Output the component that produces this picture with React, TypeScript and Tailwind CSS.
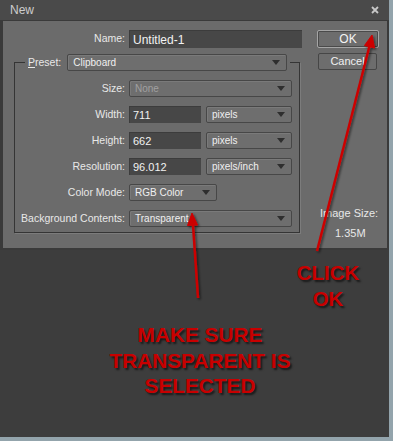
import React from "react";

const Caret = () => (
  <svg width="8" height="5" viewBox="0 0 8 5" className="shrink-0">
    <path d="M0 0 L8 0 L4 5 Z" fill="#2e2e2e" />
  </svg>
);

function Dropdown({ w, text, disabled }: { w: string; text: string; disabled?: boolean }) {
  return (
    <div
      className={`${w} h-[17px] border border-[#474747] rounded-[2px] bg-[#6e6e6e] flex items-center justify-between pl-[5px] pr-[6px] shadow-[inset_1px_1px_0_#7a7a7a]`}
    >
      <span className={`text-[10px] ${disabled ? "text-[#a0a0a0]" : "text-[#f0f0f0]"}`}>{text}</span>
      <Caret />
    </div>
  );
}

function Input({ w, text }: { w: string; text: string }) {
  return (
    <div className={`${w} h-[17px] bg-[#474747] border-t border-l border-[#3c3c3c] flex items-center pl-[3px]`}>
      <span className="text-[11px] text-[#f2f2f2]">{text}</span>
    </div>
  );
}

function Row({ label, children }: { label: string; children: React.ReactNode }) {
  return (
    <div className="flex items-center h-[17px]">
      <div className="w-[110px] text-right text-[10.5px] text-[#e8e8e8] whitespace-nowrap">{label}</div>
      <div className="ml-[4px] flex items-center gap-[5px]">{children}</div>
    </div>
  );
}

export default function App() {
  return (
    <div className="w-[393px] h-[441px] relative overflow-hidden bg-[#3d3d3d] border-r-[4px] border-b-[4px] border-[#93a4ac] font-['Liberation_Sans',Arial,sans-serif]">
      {/* window */}
      <div className="w-[389px]">
        {/* title bar */}
        <div className="h-[20px] bg-[#4a4a4a] flex items-center justify-between pl-[10px] pr-[10px]">
          <span className="text-[12px] text-[#cdcdcd]">New</span>
          <svg width="8" height="8" viewBox="0 0 8 8">
            <path d="M1 1 L7 7 M7 1 L1 7" stroke="#c8c8c8" strokeWidth="1.8" />
          </svg>
        </div>
        {/* body */}
        <div className="h-[230px] bg-[#6b6b6b] border-t border-l-[3px] border-r-[2px] border-b-[2px] border-[#3a3a3a] flex pt-[9px]">
          {/* left column */}
          <div className="w-[300px] flex flex-col">
            <div className="flex items-center h-[18px]">
              <div className="w-[122px] text-right text-[10.5px] text-[#e8e8e8]">Name:</div>
              <div className="ml-[4px] w-[173px] h-[18px] bg-[#474747] border-t border-l border-[#3c3c3c] flex items-center pl-[3px]">
                <span className="text-[12px] text-[#f2f2f2]">Untitled-1</span>
              </div>
            </div>
            <fieldset className="mt-[6px] ml-[11px] w-[286px] border border-[#353535] shadow-[1px_1px_0_#7c7c7c] px-0 pt-[9px] pb-[5px] flex flex-col gap-[9px] min-w-0">
              <legend className="ml-[10px] px-[3px] flex items-center">
                <span className="text-[10.5px] text-[#e8e8e8]">
                  <span className="underline">P</span>reset:
                </span>
                <div className="ml-[6px]">
                  <Dropdown w="w-[220px]" text="Clipboard" />
                </div>
              </legend>
              <Row label="Size:">
                <Dropdown w="w-[163px]" text="None" disabled />
              </Row>
              <Row label="Width:">
                <Input w="w-[72px]" text="711" />
                <Dropdown w="w-[86px]" text="pixels" />
              </Row>
              <Row label="Height:">
                <Input w="w-[72px]" text="662" />
                <Dropdown w="w-[86px]" text="pixels" />
              </Row>
              <Row label="Resolution:">
                <Input w="w-[72px]" text="96.012" />
                <Dropdown w="w-[86px]" text="pixels/inch" />
              </Row>
              <Row label="Color Mode:">
                <Dropdown w="w-[88px]" text="RGB Color" />
              </Row>
              <Row label="Background Contents:">
                <Dropdown w="w-[163px]" text="Transparent" />
              </Row>
            </fieldset>
          </div>
          {/* right column */}
          <div className="ml-[14px] w-[62px] flex flex-col items-start">
            <div className="w-[62px] h-[18px] border border-[#a5a5a5] rounded-[2px] bg-[#6d6d6d] flex items-center justify-center shadow-[inset_0_0_0_1px_#4a4a4a]">
              <span className="text-[12px] text-[#f4f4f4]">OK</span>
            </div>
            <div className="mt-[5px] ml-[1px] w-[59px] h-[17px] border border-[#464646] rounded-[2px] bg-[#6d6d6d] flex items-center justify-center">
              <span className="text-[11px] text-[#f0f0f0]">Cancel</span>
            </div>
            <div className="mt-[137px] ml-[3px] text-[11px] text-[#e8e8e8] leading-[13px]">Image Size:</div>
            <div className="mt-[7px] ml-[18px] text-[11px] text-[#e8e8e8] leading-[13px]">1.35M</div>
          </div>
        </div>
      </div>

      {/* annotations */}
      <svg className="absolute left-0 top-0 pointer-events-none" width="393" height="441" viewBox="0 0 393 441">
        <defs>
          <filter id="sh" x="-20%" y="-20%" width="140%" height="140%">
            <feDropShadow dx="1.5" dy="1.5" stdDeviation="1.2" floodColor="#000" floodOpacity="0.55" />
          </filter>
        </defs>
        <g filter="url(#sh)" fill="#cc0000" stroke="#cc0000">
          <line x1="317" y1="251" x2="370" y2="44" strokeWidth="2.5" />
          <path d="M372 35 L374.5 48 L364.5 45.5 Z" strokeWidth="1" />
          <line x1="198" y1="298" x2="192.8" y2="222" strokeWidth="2.5" />
          <path d="M192 213 L197.5 225 L187.5 225.5 Z" strokeWidth="1" />
        </g>
      </svg>
      <div className="absolute left-[268px] top-[260px] w-[120px] text-center text-[20.5px] leading-[26px] font-bold text-[#c80000] [text-shadow:2px_2px_2px_rgba(0,0,0,0.6)]">
        CLICK
        <br />
        OK
      </div>
      <div className="absolute left-[80px] top-[322px] w-[240px] text-center text-[20.8px] leading-[25.5px] font-bold text-[#c80000] [text-shadow:2px_2px_2px_rgba(0,0,0,0.6)]">
        MAKE SURE
        <br />
        TRANSPARENT IS
        <br />
        SELECTED
      </div>
    </div>
  );
}
